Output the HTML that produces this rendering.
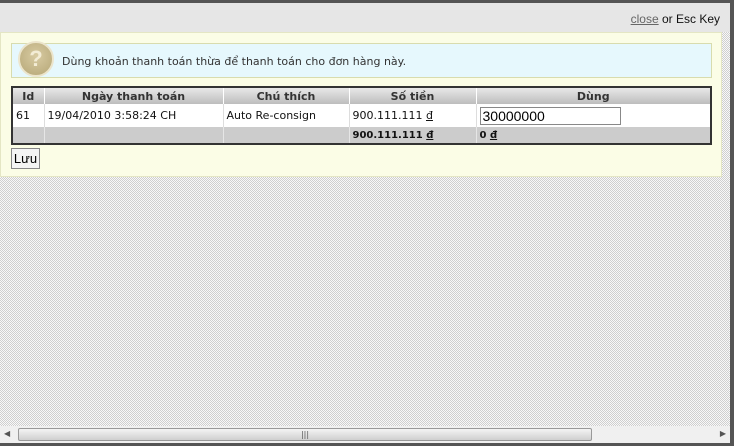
<!DOCTYPE html>
<html><head><meta charset="utf-8"><style>
*{margin:0;padding:0;box-sizing:border-box}
body{width:734px;height:446px;overflow:hidden;background:#555;font-family:Tahoma,"DejaVu Sans","Liberation Sans",sans-serif;position:relative}
#win{position:absolute;left:0;top:3px;width:730px;height:440px;background-color:#fff;background-image:repeating-conic-gradient(#cfcfcf 0 25%,#f8f8f8 0 50%);background-size:2px 2px}
#hdr{position:absolute;left:0;top:0;width:730px;height:29px;background:#e6e6e6;font:12px "Liberation Sans",sans-serif;color:#111}
#hdr span{position:absolute;right:10px;top:9px}
#hdr a{color:#666;text-decoration:underline}
#panel{position:absolute;left:0;top:29px;width:722px;height:145px;background:#fbfde6;border:1px solid #e4e6c4}
#msg{position:absolute;left:10px;top:10px;width:701px;height:35px;background:#e6f8fd;border:1px solid #d8dcae;font-size:11px;color:#333}
#msg .t{position:absolute;left:50px;top:11px}
#ic{position:absolute;left:6px;top:-3px;width:36px;height:36px;border-radius:50%;background:radial-gradient(circle at 50% 40%,#d8cba2,#b5a676);border:2px solid #ece5cc;color:#f3ecd5;font:bold 22px "Liberation Sans",sans-serif;text-align:center;line-height:32px}
table{position:absolute;left:10px;top:53px;width:701px;border-collapse:collapse;border:2px solid #333;font-size:11px;color:#111}
th{height:17px;background:linear-gradient(#e8e8e8,#bdbdbd);font-weight:bold;color:#333;border-left:1px solid #fff;font-size:11px}
td{border-left:1px solid #ddd;padding-left:3px;height:23px;background:#fff}
tr.s td{height:17px;background:#ccc;font-weight:bold;border-left:1px solid #e6e6e6;font-family:Verdana,"DejaVu Sans",sans-serif;font-size:10px}
input{width:141px;height:18px;border:1px solid #888;font:14px "Liberation Sans",sans-serif;padding-left:2px;background:#fff}
button{position:absolute;left:10px;top:115px;width:29px;height:21px;border:1px solid #888;background:#f4f4f4;font:13px "Liberation Sans",sans-serif}
#sb{position:absolute;left:0;top:423px;width:730px;height:17px;background:#f0f0f0}
#th{position:absolute;left:18px;top:2px;width:574px;height:13px;border:1px solid #999;border-radius:2px;background:linear-gradient(#f4f4f4,#cfcfcf);text-align:center;font-size:8px;line-height:11px;color:#555}
</style></head><body>
<div id="win">
<div id="hdr"><span><a>close</a> or Esc Key</span></div>
<div id="panel">
<div id="msg"><div id="ic">?</div><div class="t">Dùng khoản thanh toán thừa để thanh toán cho đơn hàng này.</div></div>
<table>
<tr><th style="width:32px">Id</th><th style="width:179px">Ngày thanh toán</th><th style="width:126px">Chú thích</th><th style="width:127px">Số tiền</th><th>Dùng</th></tr>
<tr><td>61</td><td>19/04/2010 3:58:24 CH</td><td>Auto Re-consign</td><td>900.111.111 <u>đ</u></td><td><input value="30000000"></td></tr>
<tr class="s"><td></td><td></td><td></td><td>900.111.111 <u>đ</u></td><td>0 <u>đ</u></td></tr>
</table>
<button>Lưu</button>
</div>
<div id="sb"><span style="position:absolute;left:4px;top:3px;font-size:8px;color:#555">◀</span><div id="th">|||</div><span style="position:absolute;right:4px;top:3px;font-size:8px;color:#555">▶</span></div>
</div>
</body></html>
